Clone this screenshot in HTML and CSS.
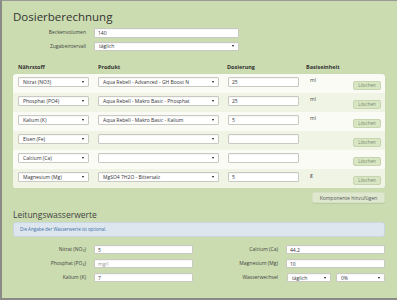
FILE: index.html
```html
<!DOCTYPE html>
<html lang="de">
<head>
<meta charset="utf-8">
<title>Dosierberechnung</title>
<link rel="stylesheet" href="styles.css">
</head>
<body>
<div class="frame">
  <h1 class="title">Dosierberechnung</h1>
  <div class="form">
    <div class="frow">
      <label class="flabel">Beckenvolumen</label>
      <input class="inp w145" type="text" value="140">
    </div>
    <div class="frow">
      <label class="flabel">Zugabeintervall</label>
      <div class="sel w145"><select><option>täglich</option></select></div>
    </div>
  </div>

  <div class="thead tgrid">
    <span>Nährstoff</span><span>Produkt</span><span>Dosierung</span><span>Basiseinheit</span>
  </div>
  <div class="card">
    <div class="trow tgrid">
      <div class="sel w71"><select><option>Nitrat (NO3)</option></select></div>
      <div class="sel w121"><select><option>Aqua Rebell - Advanced - GH Boost N</option></select></div>
      <input class="inp w71" type="text" value="25">
      <span class="unit">ml</span>
      <button class="del">Löschen</button>
    </div>
    <div class="trow tgrid">
      <div class="sel w71"><select><option>Phosphat (PO4)</option></select></div>
      <div class="sel w121"><select><option>Aqua Rebell - Makro Basic - Phosphat</option></select></div>
      <input class="inp w71" type="text" value="25">
      <span class="unit">ml</span>
      <button class="del">Löschen</button>
    </div>
    <div class="trow tgrid">
      <div class="sel w71"><select><option>Kalium (K)</option></select></div>
      <div class="sel w121"><select><option>Aqua Rebell - Makro Basic - Kalium</option></select></div>
      <input class="inp w71" type="text" value="5">
      <span class="unit">ml</span>
      <button class="del">Löschen</button>
    </div>
    <div class="trow tgrid">
      <div class="sel w71"><select><option>Eisen (Fe)</option></select></div>
      <div class="sel w121"><select><option></option></select></div>
      <input class="inp w71" type="text" value="">
      <span class="unit"></span>
      <button class="del">Löschen</button>
    </div>
    <div class="trow tgrid">
      <div class="sel w71"><select><option>Calcium (Ca)</option></select></div>
      <div class="sel w121"><select><option></option></select></div>
      <input class="inp w71" type="text" value="">
      <span class="unit"></span>
      <button class="del">Löschen</button>
    </div>
    <div class="trow tgrid">
      <div class="sel w71"><select><option>Magnesium (Mg)</option></select></div>
      <div class="sel w121"><select><option>MgSO4 7H2O - Bittersalz</option></select></div>
      <input class="inp w71" type="text" value="5">
      <span class="unit">g</span>
      <button class="del">Löschen</button>
    </div>
  </div>
  <div class="actions"><button class="add">Komponente hinzufügen</button></div>

  <h2 class="subtitle">Leitungswasserwerte</h2>
  <div class="info">Die Angabe der Wasserwerte ist optional.</div>

  <div class="water">
    <label class="flabel">Nitrat (NO<sub>3</sub>)</label>
    <input class="inp" type="text" value="5">
    <label class="flabel">Calcium (Ca)</label>
    <input class="inp" type="text" value="44.2">

    <label class="flabel">Phosphat (PO<sub>4</sub>)</label>
    <input class="inp" type="text" placeholder="mg/l">
    <label class="flabel">Magnesium (Mg)</label>
    <input class="inp" type="text" value="10">

    <label class="flabel">Kalium (K)</label>
    <input class="inp" type="text" value="7">
    <label class="flabel">Wasserwechsel</label>
    <div class="pair">
      <div class="sel w44"><select><option>täglich</option></select></div>
      <div class="sel w49"><select><option>0%</option></select></div>
    </div>
  </div>
</div>
</body>
</html>
```
FILE: styles.css
```css
* { box-sizing: border-box; }
html, body { margin: 0; padding: 0; }
body {
  font-family: "Open Sans", "DejaVu Sans", sans-serif;
  color: #333;
  background: #cbdcb0;
}
.frame {
  height: 300px;
  border-left: 2px solid #8a8a86;
  border-top: 1px solid #9a9a96;
  border-bottom: 2px solid #8a8a86;
  background: #cbdcb0;
  padding: 0 12px 0 11px;
  overflow: hidden;
}
.title {
  margin: 9px 0 4px;
  font-size: 11.5px;
  line-height: 14px;
  font-weight: 400;
  color: #333;
}
.form { display: flex; flex-direction: column; gap: 4px; }
.frow { display: flex; align-items: center; gap: 8px; }
.flabel {
  width: 73px;
  text-align: right;
  font-size: 5px;
  line-height: 9px;
  color: #444;
}
.flabel sub { font-size: 3.5px; line-height: 0; vertical-align: -1px; }
.inp {
  height: 9.5px;
  border: 1px solid #c9c9c2;
  border-radius: 1px;
  background: #fff;
  font-family: inherit;
  font-size: 5px;
  padding: 0 3px;
  color: #333;
  box-shadow: inset 0 1px 1px rgba(0,0,0,0.04);
  outline: none;
}
.inp::placeholder { color: #999; }
.sel {
  position: relative;
  height: 9.5px;
  border: 1px solid #c9c9c2;
  border-radius: 1px;
  background: #fff;
  box-shadow: inset 0 1px 1px rgba(0,0,0,0.04);
}
.sel select {
  appearance: none;
  -webkit-appearance: none;
  border: 0;
  background: transparent;
  width: 100%;
  height: 100%;
  display: block;
  font-family: inherit;
  font-size: 5px;
  color: #333;
  padding: 0 8px 0 4px;
  outline: none;
}
.sel::after {
  content: "";
  position: absolute;
  right: 4px;
  top: 50%;
  margin-top: -1px;
  border-left: 1.5px solid transparent;
  border-right: 1.5px solid transparent;
  border-top: 2.5px solid #111;
}
.w145 { width: 145px; }
.w121 { width: 121px; }
.w71 { width: 71px; }
.w44 { width: 44px; }
.w49 { width: 49px; }

.tgrid {
  display: grid;
  grid-template-columns: 80px 130px 78px 47px 28px;
}
.thead {
  margin-top: 12px;
  padding-left: 5px;
  font-size: 5.5px;
  line-height: 8px;
  font-weight: 700;
  color: #333;
}
.thead span:nth-child(3) { margin-left: -1px; }
.card {
  margin-top: 3px;
  background: #fafbf5;
  border-radius: 3px;
  overflow: hidden;
  box-shadow: 0 0 1px rgba(0,0,0,0.08);
}
.trow {
  height: 19px;
  padding: 3px 0 3px 5px;
  align-items: start;
}
.trow:nth-child(even) { background: #f0f4e4; }
.unit {
  font-size: 5px;
  line-height: 7px;
  padding-left: 4px;
  color: #444;
}
.del {
  align-self: end;
  width: 28px;
  height: 9px;
  padding: 0;
  border: 1px solid #c6d5ae;
  border-radius: 2px;
  background: #d9e6c4;
  color: #75866a;
  font-family: inherit;
  font-size: 4.5px;
  line-height: 7px;
}
.actions { display: flex; justify-content: flex-end; margin-top: 4px; }
.add {
  width: 73px;
  height: 11px;
  padding: 0;
  border: 1px solid #d5e0c2;
  border-radius: 2px;
  background: #dfe8cf;
  color: #555;
  font-family: inherit;
  font-size: 5px;
  box-shadow: 0 1px 1px rgba(0,0,0,0.08);
}
.subtitle {
  margin: 7px 0 2px;
  font-size: 8.5px;
  line-height: 10px;
  font-weight: 400;
  color: #444;
}
.info {
  height: 15px;
  background: #dde6ee;
  border: 1px solid #c8d6e2;
  border-radius: 3px;
  padding: 0 6px;
  font-size: 4.5px;
  line-height: 13px;
  color: #3b6fa5;
}
.water {
  margin-top: 8px;
  display: grid;
  grid-template-columns: 73px 99px 77px 99px;
  column-gap: 8px;
  row-gap: 5px;
  align-items: center;
}
.water .flabel { width: auto; }
.water .inp { width: 99px; height: 9px; }
.pair { display: flex; gap: 5px; padding-left: 1px; }
.pair .sel { height: 9px; }
```
